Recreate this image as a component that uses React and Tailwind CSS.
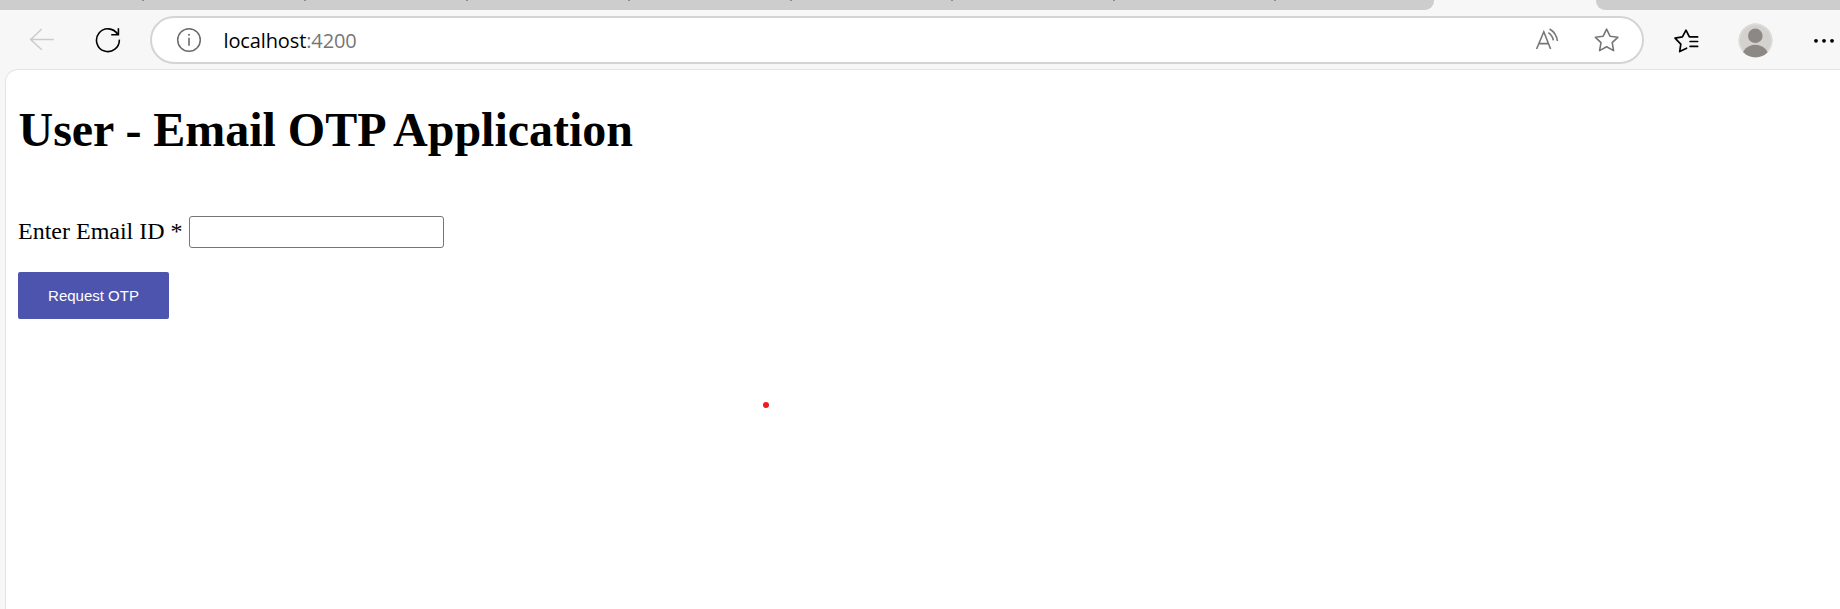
const tabMarks = [142, 304, 466, 628, 790, 951, 1113, 1274];

function TabStrip() {
  return (
    <div className="relative flex h-[10px] shrink-0 justify-between">
      <div className="h-[10px] w-[1434px] rounded-br-[9px] bg-[#cdcdcd]" />
      <div className="h-[10px] w-[244px] rounded-bl-[9px] bg-[#cdcdcd]" />
      {tabMarks.map((x) => (
        <span key={x} className="absolute top-0 h-px w-[2px] bg-[#8a8a8a]" style={{ left: x }} />
      ))}
    </div>
  );
}

function Toolbar() {
  return (
    <div className="flex h-[59px] shrink-0 items-start pt-[6px]">
      <svg className="ml-[29px] mt-[11px] h-[26px] w-[26px]" viewBox="0 0 26 26" fill="none" stroke="#cbcbcb" strokeWidth="1.5">
        <path d="M24.8 12.5H1.5M12.8 2 1.6 12.5 12.8 22.7" />
      </svg>
      <svg className="ml-[40px] mt-[11px] h-[26px] w-[26px]" viewBox="0 0 26 26" fill="none" stroke="#000" strokeWidth="1.6">
        <path d="M24.3 12.6A11.4 11.4 0 1 1 22.6 7.2M23.4 1.2V7.8H16.2" />
      </svg>
      <div className="ml-[29px] flex h-[48px] w-[1494px] items-center rounded-full border-2 border-[#d4d4d4] bg-white">
        <svg className="ml-[24px] h-[26px] w-[26px]" viewBox="0 0 26 26" fill="none" stroke="#6b6b6b" strokeWidth="1.5">
          <circle cx="13" cy="13" r="11.3" />
          <path d="M13 10.8V18.8" strokeWidth="1.6" />
          <circle cx="13" cy="7.8" r="1" fill="#6b6b6b" stroke="none" />
        </svg>
        <div className="ml-[21.5px] w-[160px] whitespace-nowrap pt-px font-['Open_Sans','Noto_Sans',sans-serif] text-[20px] leading-[28px] tracking-[-0.12px] text-black">
          localhost<span className="text-[#767676]">:4200</span>
        </div>
        <svg className="ml-auto h-[26px] w-[26px]" viewBox="0 0 26 26" fill="none" stroke="#767676" strokeWidth="1.6">
          <path d="M1.6 22 8.8 4.8 15.6 22M4.4 16.6H13.2M13.4 5.6Q17.6 8.6 18.4 13.4M14.6 2Q21.4 6 22.4 14" />
        </svg>
        <Star className="ml-[33px] mr-[22px] h-[26px] w-[26px]" />
      </div>
      <svg className="ml-[28.5px] mt-[12px] h-[26px] w-[26px]" viewBox="0 0 26 26" fill="none" stroke="#000" strokeWidth="1.7" strokeLinejoin="round" strokeLinecap="round">
        <path d="M13.6 20.2 6.7 23.6 7.8 16.2 2 10.2 9.4 8.9 13 2.2 16.4 8.9H24.6M17.1 13.5H24.6M17.1 18.4H24.6" />
      </svg>
      <svg className="ml-[39px] mt-[7px] h-[35px] w-[35px]" viewBox="0 0 35 35">
        <defs>
          <clipPath id="avatar"><circle cx="17.5" cy="17.5" r="16.8" /></clipPath>
        </defs>
        <circle cx="17.5" cy="17.5" r="16.9" fill="#d3d2cf" />
        <circle cx="17.5" cy="17.5" r="16.3" fill="none" stroke="#dedddb" strokeWidth="1.4" />
        <g fill="#8c8885" clipPath="url(#avatar)">
          <circle cx="17.3" cy="12.8" r="7.3" />
          <ellipse cx="17.3" cy="34" rx="13.3" ry="12.2" />
        </g>
      </svg>
      <svg className="ml-[40.5px] mt-[21px] h-[8px] w-[24px]" viewBox="0 0 24 8" fill="#000">
        <circle cx="3" cy="3.8" r="1.9" /><circle cx="11" cy="3.8" r="1.9" /><circle cx="19" cy="3.8" r="1.9" />
      </svg>
    </div>
  );
}

function Star({ className }) {
  return (
    <svg className={className} viewBox="0 0 26 26" fill="none" stroke="#767676" strokeWidth="1.6" strokeLinejoin="round">
      <path d="M12.6 2.2 16 9.2 23.8 10.3 18.2 15.7 19.6 23.6 12.6 19.8 5.6 23.6 7 15.7 1.4 10.3 9.2 9.2Z" />
    </svg>
  );
}

export default function App() {
  return (
    <div className="flex h-[609px] w-[1840px] flex-col overflow-hidden bg-[#f7f7f7]">
      <TabStrip />
      <Toolbar />
      <main className="relative ml-[5px] flex-1 rounded-tl-[13px] border-l border-t border-[#e4e4e4] bg-white pl-[12px] font-['Liberation_Serif',serif] text-black">
        <h1 className="mt-[32px] pl-[0.5px] text-[48px] font-bold leading-[55px] tracking-[-0.03px]">User - Email OTP Application</h1>
        <form className="mt-[59px]">
          <div className="flex h-[32px] items-center text-[24px] leading-[28px]">
            <label htmlFor="email" className="pb-[2px]">Enter Email ID *</label>
            <input id="email" type="email" className="ml-[6px] h-[32px] w-[255px] rounded-[3px] border border-[#767676] bg-white px-1 outline-none" />
          </div>
          <button type="button" className="mt-[24px] flex h-[47px] w-[151px] items-center justify-center rounded-[2px] bg-[#4d54ae] font-['Liberation_Sans',sans-serif] text-[15px] leading-[18px] text-white">
            Request OTP
          </button>
        </form>
        <span className="absolute left-[757px] top-[332px] h-[6px] w-[6px] rounded-full bg-[#ee1c1c]" />
      </main>
    </div>
  );
}
